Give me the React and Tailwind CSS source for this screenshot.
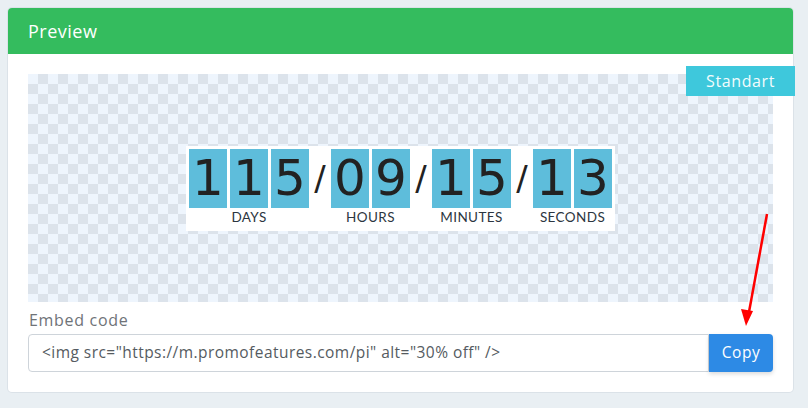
import React from 'react';

const groups = [
  { digits: ['1', '1', '5'], label: 'DAYS' },
  { digits: ['0', '9'], label: 'HOURS' },
  { digits: ['1', '5'], label: 'MINUTES' },
  { digits: ['1', '3'], label: 'SECONDS' }
];

const Group = ({ digits, label }) => (
  <div className="flex flex-col items-center">
    <div className="flex gap-[3px]">
      {digits.map((d, i) => (
        <div
          key={i}
          className="flex h-[59px] w-[38px] items-center justify-center bg-[#5ebddb] font-['DejaVu_Sans',sans-serif] text-[50px] leading-none text-[#222]"
        >
          {d}
        </div>
      ))}
    </div>
    <div className="mt-[1px] font-['Lato',sans-serif] text-[13.5px] leading-[16px] tracking-[0.4px] text-[#2c3640]">
      {label}
    </div>
  </div>
);

const Slash = () => (
  <div className="flex h-[59px] w-[22px] items-center justify-center font-['DejaVu_Sans',sans-serif] text-[34px] text-[#222]">
    /
  </div>
);

const App = () => {
  return (
    <div className="relative h-[408px] w-[808px] bg-[#e9eff3] pl-2 pt-2 font-['Open_Sans',sans-serif]">
      <div className="w-[785px] rounded-[4px] bg-white shadow-[0_0_0_1px_#dbe2e8]">
        <div className="flex h-[46px] items-center rounded-t-[4px] bg-[#34bc5e] px-5 text-[18px] tracking-[0.5px] text-white">
          Preview
        </div>
        <div className="px-5 pb-5 pt-5">
          <div className="relative flex h-[228px] items-center justify-center bg-[conic-gradient(#dce3eb_25%,#eef5fd_0_50%,#dce3eb_0_75%,#eef5fd_0)] bg-[length:20px_20px]">
            <div className="absolute right-[-22px] top-[-8px] flex h-[30px] w-[109px] items-center justify-center bg-[#3ec8dc] text-[16px] tracking-[0.6px] text-[#f3fcfd]">
              Standart
            </div>
            <div className="flex items-start bg-white px-[3px] pb-[6px] pt-[3px]">
              <Group {...groups[0]} />
              <Slash />
              <Group {...groups[1]} />
              <Slash />
              <Group {...groups[2]} />
              <Slash />
              <Group {...groups[3]} />
            </div>
          </div>
          <div className="mt-[7px] pl-px text-[16px] leading-[22px] tracking-[0.7px] text-[#6f7378]">Embed code</div>
          <div className="mt-[3px] flex h-[38px]">
            <div className="flex flex-1 items-center rounded-l-[4px] border border-[#ced4da] px-[13px] text-[15.5px] tracking-[0.45px] text-[#555b61]">
              {'<img src="https://m.promofeatures.com/pi" alt="30% off" />'}
            </div>
            <button className="w-[64px] rounded-r-[4px] bg-[#2d8ae5] text-[15.5px] tracking-[0.5px] text-white shadow-[0_2px_4px_rgba(0,0,0,0.15)]">
              Copy
            </button>
          </div>
        </div>
      </div>
      <svg className="absolute left-0 top-0" width="808" height="408">
        <line x1="767" y1="214" x2="749" y2="312" stroke="#ff0000" strokeWidth="2.5" />
        <polygon points="746,326 741,309 753,311" fill="#ff0000" />
      </svg>
    </div>
  );
};

export default App;
